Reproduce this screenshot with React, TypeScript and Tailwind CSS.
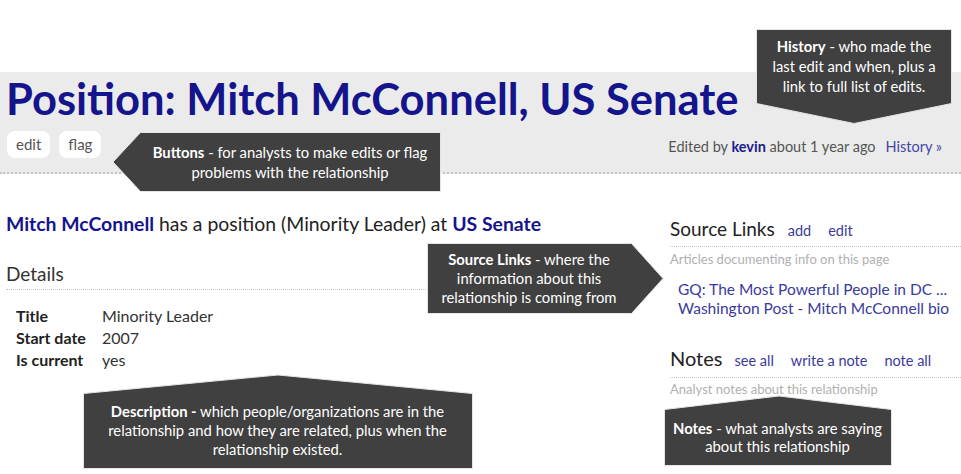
import React, { FC, ReactNode } from "react";
import clsx from "clsx";

interface ICallout {
  className: string;
  width: number;
  height: number;
  points: string;
  bodyClassName: string;
  children: ReactNode;
}

// dark annotation bubble drawn over the page
const Callout: FC<ICallout> = ({
  className,
  width,
  height,
  points,
  bodyClassName,
  children,
}) => {
  return (
    <div className={clsx("absolute", className)}>
      <svg width={width} height={height} className="absolute left-0 top-0">
        <polygon points={points} fill="#404040" stroke="#e4e4e4" strokeWidth="1" />
      </svg>
      <div
        className={clsx(
          "absolute flex items-center justify-center text-center text-white text-[14.8px] font-['Lato',sans-serif]",
          bodyClassName
        )}
      >
        <div>{children}</div>
      </div>
    </div>
  );
};

const Header = () => {
  return (
    <header className="bg-[#ebebeb] pt-[4px] pb-[14px] border-b-2 border-dotted border-[#c4c4c4]">
      <h1 className="pl-[6px] text-[43.5px] leading-[44px] font-bold text-[#14148c]">
        Position: Mitch McConnell, US Senate
      </h1>
      <div className="mt-[11px] flex items-center justify-between pl-[7px] pr-[19px]">
        <div className="flex gap-[9px]">
          <span className="h-[27px] px-[9px] flex items-center bg-white rounded-[8px] text-[15px] text-[#555]">
            edit
          </span>
          <span className="h-[27px] px-[9px] flex items-center bg-white rounded-[8px] text-[15px] text-[#555]">
            flag
          </span>
        </div>
        <div className="text-[14.5px] text-[#555] pt-[4px]">
          Edited by <span className="font-bold text-[#1c1c8c]">kevin</span> about 1 year ago
          <span className="ml-[10px] text-[#4646a6]">History »</span>
        </div>
      </div>
    </header>
  );
};

const Details = () => {
  const rows = [
    ["Title", "Minority Leader"],
    ["Start date", "2007"],
    ["Is current", "yes"],
  ];
  return (
    <section className="w-[640px] pl-[6px]">
      <p className="mt-[36px] text-[19.4px] leading-[28px] text-[#222]">
        <span className="font-bold text-[#14148c]">Mitch McConnell</span> has a position
        (Minority Leader) at <span className="font-bold text-[#14148c]">US Senate</span>
      </p>
      <h2 className="mt-[24px] text-[19px] leading-[24px] pb-[3px] text-[#333] border-b border-dotted border-[#c8c8c8]">
        Details
      </h2>
      <div className="mt-[15px] pl-[10px] grid grid-cols-[86px_1fr] text-[16px] leading-[22px]">
        {rows.map(([label, value]) => (
          <React.Fragment key={label}>
            <div className="font-bold text-[#222]">{label}</div>
            <div className="text-[#333]">{value}</div>
          </React.Fragment>
        ))}
      </div>
    </section>
  );
};

const SideColumn = () => {
  return (
    <aside className="flex-1 ml-[30px]">
      <h2 className="mt-[43px] pb-[3px] text-[19px] leading-[24px] text-[#222] border-b border-dotted border-[#c8c8c8]">
        Source Links
        <span className="ml-[13px] text-[14.5px] text-[#3a3a9c]">add</span>
        <span className="ml-[17px] text-[14.5px] text-[#3a3a9c]">edit</span>
      </h2>
      <div className="mt-[4px] text-[13px] leading-[16px] text-[#b0b0b0]">
        Articles documenting info on this page
      </div>
      <div className="mt-[13px] pl-[8px] text-[15.5px] leading-[19px] text-[#3a3a9c]">
        <div>GQ: The Most Powerful People in DC ...</div>
        <div>Washington Post - Mitch McConnell bio</div>
      </div>
      <h2 className="mt-[28px] pb-[4px] text-[20px] leading-[24px] text-[#222] border-b border-dotted border-[#c8c8c8]">
        Notes
        <span className="ml-[12px] text-[14.5px] text-[#3a3a9c]">see all</span>
        <span className="ml-[17px] text-[14.5px] text-[#3a3a9c]">write a note</span>
        <span className="ml-[17px] text-[14.5px] text-[#3a3a9c]">note all</span>
      </h2>
      <div className="mt-[3px] text-[13px] leading-[16px] text-[#b0b0b0]">
        Analyst notes about this relationship
      </div>
    </aside>
  );
};

export default function App() {
  return (
    <div className="relative w-[961px] h-[474px] overflow-hidden bg-white font-['Lato',sans-serif]">
      <div className="pt-[72px]">
        <Header />
        <div className="flex">
          <Details />
          <SideColumn />
        </div>
      </div>

      <Callout
        className="left-[112px] top-[131px] w-[330px] h-[62px]"
        width={330}
        height={62}
        points="28.5,1.5 328.5,1.5 328.5,60.5 28.5,60.5 1,31"
        bodyClassName="left-[28px] top-[1px] w-[300px] h-[60px] leading-[20px]"
      >
        <b>Buttons</b> - for analysts to make edits or flag
        <br />
        problems with the relationship
      </Callout>

      <Callout
        className="left-[755px] top-[28px] w-[198px] h-[97px]"
        width={198}
        height={97}
        points="1.5,1.5 196.5,1.5 196.5,75.5 99,95.5 1.5,75.5"
        bodyClassName="left-[1px] top-[1px] w-[196px] h-[74px] leading-[20px]"
      >
        <b>History</b> - who made the
        <br />
        last edit and when, plus a
        <br />
        link to full list of edits.
      </Callout>

      <Callout
        className="left-[426px] top-[242px] w-[239px] h-[73px]"
        width={239}
        height={73}
        points="1.5,1.5 205.5,1.5 237,36.5 205.5,71.5 1.5,71.5"
        bodyClassName="left-[1px] top-[1px] w-[204px] h-[70px] leading-[19px]"
      >
        <b>Source Links</b> - where the
        <br />
        information about this
        <br />
        relationship is coming from
      </Callout>

      <Callout
        className="left-[82px] top-[374px] w-[392px] h-[100px]"
        width={392}
        height={100}
        points="1.5,19.5 196,1 390.5,19.5 390.5,94.5 1.5,94.5"
        bodyClassName="left-[1px] top-[19px] w-[389px] h-[75px] leading-[19px]"
      >
        <b>Description -</b> which people/organizations are in the
        <br />
        relationship and how they are related, plus when the
        <br />
        relationship existed.
      </Callout>

      <Callout
        className="left-[663px] top-[395px] w-[230px] h-[72px]"
        width={230}
        height={72}
        points="1.5,14.5 116,1 228.5,14.5 228.5,70.5 1.5,70.5"
        bodyClassName="left-[1px] top-[14px] w-[227px] h-[56px] leading-[18px]"
      >
        <b>Notes</b> - what analysts are saying
        <br />
        about this relationship
      </Callout>
    </div>
  );
}
